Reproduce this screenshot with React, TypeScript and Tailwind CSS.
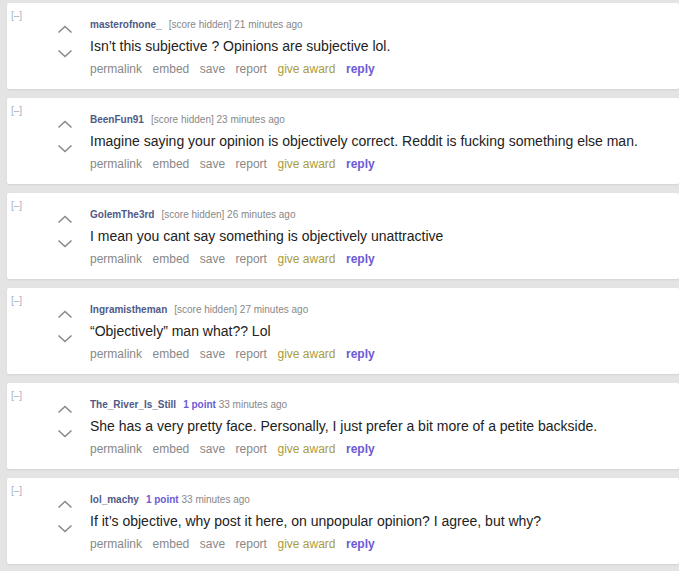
import React from "react";

type Comment = {
  user: string;
  score: string | null;
  time: string;
  body: string;
};

const comments: Comment[] = [
  { user: "masterofnone_", score: null, time: "21 minutes ago", body: "Isn’t this subjective ? Opinions are subjective lol." },
  { user: "BeenFun91", score: null, time: "23 minutes ago", body: "Imagine saying your opinion is objectively correct. Reddit is fucking something else man." },
  { user: "GolemThe3rd", score: null, time: "26 minutes ago", body: "I mean you cant say something is objectively unattractive" },
  { user: "Ingramistheman", score: null, time: "27 minutes ago", body: "“Objectively” man what?? Lol" },
  { user: "The_River_Is_Still", score: "1 point", time: "33 minutes ago", body: "She has a very pretty face. Personally, I just prefer a bit more of a petite backside." },
  { user: "lol_machy", score: "1 point", time: "33 minutes ago", body: "If it’s objective, why post it here, on unpopular opinion? I agree, but why?" },
];

const Chevron = ({ up }: { up?: boolean }) => (
  <svg width="16" height="9" viewBox="0 0 16 9" fill="none">
    <path
      d={up ? "M1.5 7.5 L8 1.5 L14.5 7.5" : "M1.5 1.5 L8 7.5 L14.5 1.5"}
      stroke="#8a8a8a"
      strokeWidth="1.6"
    />
  </svg>
);

function CommentCard({ c }: { c: Comment }) {
  return (
    <div className="ml-[7px] h-[86px] bg-white rounded-[2px] shadow-[0_1px_2px_rgba(0,0,0,0.08)] flex pt-[6px] pl-[4px]">
      {/* collapse */}
      <div className="w-[46px] text-[10px] leading-[12px] text-[#a7b0c2] pt-[1px]">[–]</div>

      {/* votes */}
      <div className="w-[16px] flex flex-col items-start pt-[16px] gap-[15px]">
        <Chevron up />
        <Chevron />
      </div>

      {/* body */}
      <div className="ml-[17px] pt-[9px]">
        <div className="text-[10px] leading-[14px] text-[#888]">
          <span className="font-bold text-[#4f5a87]">{c.user}</span>
          {c.score ? (
            <span className="ml-[7px] font-bold text-[#6b5bd3]">{c.score}</span>
          ) : (
            <span className="ml-[7px]">[score hidden]</span>
          )}
          <span> {c.time}</span>
        </div>
        <div className="mt-[4px] text-[14px] leading-[20px] text-[#222]">{c.body}</div>
        <div className="mt-[5px] flex gap-[10.5px] text-[12px] leading-[16px] text-[#888]">
          <span>permalink</span>
          <span>embed</span>
          <span>save</span>
          <span>report</span>
          <span className="text-[#a99c3d]">give award</span>
          <span className="font-bold text-[#6a5ad6]">reply</span>
        </div>
      </div>
    </div>
  );
}

export default function App() {
  return (
    <div
      className="w-[679px] h-[571px] overflow-hidden bg-[#e4e4e4] pt-[3px] flex flex-col gap-[9px]"
      style={{ fontFamily: '"Liberation Sans", Arial, sans-serif' }}
    >
      {comments.map((c) => (
        <CommentCard key={c.user} c={c} />
      ))}
    </div>
  );
}
